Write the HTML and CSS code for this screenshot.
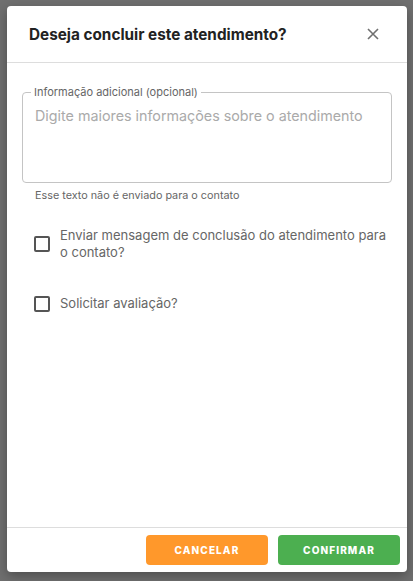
FILE: index.html
```html
<!DOCTYPE html>
<html lang="pt-BR">
<head>
  <meta charset="UTF-8">
  <title>Concluir atendimento</title>
  <link rel="stylesheet" href="styles.css">
</head>
<body>
  <div class="dialog">
    <div class="dialog-header">
      <h2>Deseja concluir este atendimento?</h2>
      <button class="close" aria-label="Fechar">
        <svg width="12" height="12" viewBox="0 0 12 12">
          <path d="M1 1 L11 11 M11 1 L1 11" stroke="#707070" stroke-width="1.6" fill="none"/>
        </svg>
      </button>
    </div>

    <div class="dialog-body">
      <fieldset class="field">
        <legend>Informação adicional (opcional)</legend>
        <textarea placeholder="Digite maiores informações sobre o atendimento"></textarea>
      </fieldset>
      <div class="helper">Esse texto não é enviado para o contato</div>

      <label class="check">
        <span class="box"></span>
        <span>Enviar mensagem de conclusão do atendimento para o contato?</span>
      </label>
      <label class="check second">
        <span class="box"></span>
        <span>Solicitar avaliação?</span>
      </label>
    </div>

    <div class="dialog-footer">
      <button class="btn cancel">Cancelar</button>
      <button class="btn confirm">Confirmar</button>
    </div>
  </div>
</body>
</html>
```

FILE: styles.css
```css
html, body {
  height: 100%;
}

body {
  margin: 0;
  background-color: #6f6f6f;
  font-family: Inter, 'Noto Sans', sans-serif;
  padding: 6px 6px 9px 7px;
  box-sizing: border-box;
}

.dialog {
  width: 400px;
  height: 566px;
  background: #fff;
  border-radius: 4px;
  box-shadow: 0 4px 12px rgba(0,0,0,0.3);
  display: flex;
  flex-direction: column;
}

.dialog-header {
  height: 56px;
  display: flex;
  align-items: center;
  justify-content: space-between;
  padding: 0 22px;
  border-bottom: 1px solid #ddd;
}

.dialog-header h2 {
  margin: 0;
  font-size: 15.3px;
  font-weight: 700;
  color: #222;
}

.close {
  border: none;
  background: none;
  padding: 0;
  margin-right: 6px;
  width: 12px;
  height: 12px;
  display: flex;
  cursor: pointer;
}

.dialog-body {
  flex: 1;
  padding: 22px 15px 0 15px;
}

.field {
  margin: 0;
  padding: 0 12px;
  height: 98px;
  box-sizing: border-box;
  border: 1px solid #c4c4c4;
  border-radius: 4px;
}

.field legend {
  font-size: 11px;
  color: #666;
  padding: 0 3px;
  margin-left: -4px;
}

.field textarea {
  border: none;
  outline: none;
  resize: none;
  width: 100%;
  height: 60px;
  padding: 8px 0 0 0;
  font-family: inherit;
  font-size: 14.3px;
  color: #333;
}

.field textarea::placeholder {
  color: #aaa;
}

.helper {
  font-size: 10.8px;
  color: #666;
  margin: 6px 0 0 13px;
}

.check {
  display: flex;
  align-items: center;
  gap: 10px;
  font-size: 13px;
  line-height: 17px;
  color: #666;
  margin: 25px 0 0 12px;
}

.check.second {
  margin-top: 34px;
}

.box {
  width: 12px;
  height: 12px;
  border: 2px solid #555;
  border-radius: 2px;
  flex: none;
}

.dialog-footer {
  height: 44px;
  border-top: 1px solid #ddd;
  display: flex;
  justify-content: flex-end;
  align-items: center;
  gap: 10px;
  padding: 0 7px;
}

.btn {
  width: 122px;
  height: 30px;
  border: none;
  border-radius: 4px;
  color: #fff;
  font-family: inherit;
  font-size: 10px;
  font-weight: 800;
  letter-spacing: 1.1px;
  text-transform: uppercase;
  cursor: pointer;
}

.cancel {
  background-color: #ff982b;
}

.confirm {
  background-color: #4caf50;
}
```
